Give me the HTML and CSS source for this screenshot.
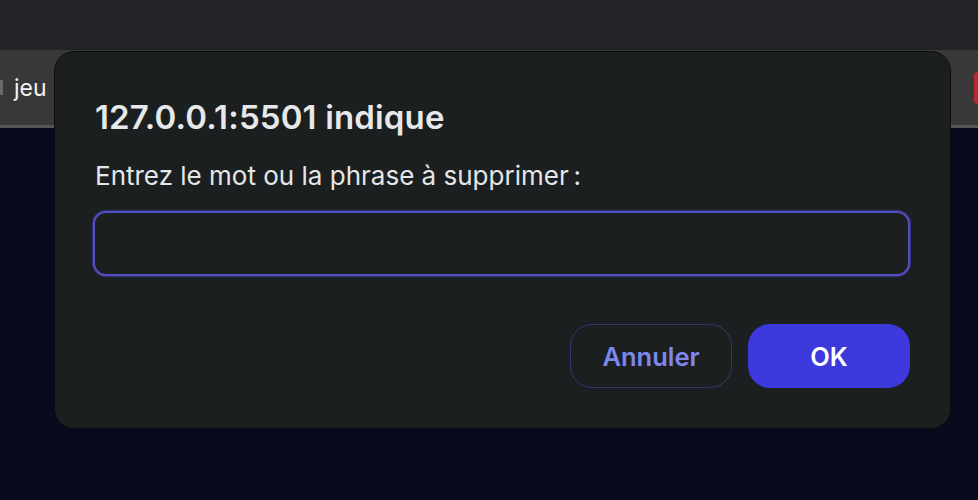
FILE: index.html
```html
<!DOCTYPE html>
<html lang="fr">
<head>
<meta charset="utf-8">
<title>Prompt</title>
<link rel="stylesheet" href="styles.css">
</head>
<body>
<div class="topbar"></div>
<div class="bookmarks">
  <span class="bm-icon"></span>
  <span class="bm-label">jeu</span>
  <span class="bm-spacer"></span>
  <span class="bm-red"></span>
</div>
<main class="page"></main>
<div class="dialog" role="dialog">
  <h1 class="dlg-title">127.0.0.1:5501 indique</h1>
  <p class="dlg-msg">Entrez le mot ou la phrase à supprimer&#8239;:</p>
  <input class="dlg-input" type="text">
  <div class="dlg-actions">
    <button class="btn btn-cancel">Annuler</button>
    <button class="btn btn-ok">OK</button>
  </div>
</div>
</body>
</html>
```
FILE: styles.css
```css
* { box-sizing: border-box; }
html, body { margin: 0; height: 100%; }
body {
  background: #0a0a1e;
  font-family: Inter, "Noto Sans", sans-serif;
  display: flex;
  flex-direction: column;
  overflow: hidden;
}
.topbar {
  height: 50px;
  background: #222326;
  flex: none;
}
.bookmarks {
  height: 78px;
  background: #383838;
  border-bottom: 3px solid #565656;
  display: flex;
  align-items: center;
  flex: none;
}
.bm-icon {
  width: 3px;
  height: 15px;
  background: #6a6a6a;
  margin-right: 11px;
}
.bm-label {
  color: #f2f2f2;
  font-size: 23px;
  line-height: 28px;
}
.bm-spacer { flex: 1; }
.bm-red {
  width: 4px;
  height: 32px;
  background: #b8292e;
  border-radius: 5px 0 0 5px;
}
.page { flex: 1; background: #0a0a1e; }

.dialog {
  position: absolute;
  left: 54px;
  top: 51px;
  width: 897px;
  height: 378px;
  background: #1b1f20;
  border: 1px solid #0c0e0f;
  border-radius: 20px;
  padding: 45px 40px 0 40px;
  display: flex;
  flex-direction: column;
}
.dlg-title {
  margin: 0;
  font-size: 33px;
  font-weight: 600;
  color: #e6e8ea;
  line-height: 40px;
  letter-spacing: 0.15px;
}
.dlg-msg {
  margin: 23px 0 0 0;
  font-size: 26px;
  color: #e4e6e8;
  line-height: 32px;
}
.dlg-input {
  margin: 19px 0 0 -2px;
  height: 65px;
  width: 817px;
  background: #1b1f20;
  border: 2px solid #534fbf;
  box-shadow: 0 0 0 1px #34317c;
  border-radius: 13px;
  outline: none;
}
.dlg-actions {
  margin: 48px 0 0 -2px;
  display: flex;
  justify-content: flex-end;
  gap: 16px;
  width: 817px;
}
.btn {
  width: 162px;
  height: 64px;
  border-radius: 22px;
  font-family: Inter, "Noto Sans", sans-serif;
  font-size: 25.5px;
  font-weight: 600;
  cursor: pointer;
}
.btn-cancel {
  background: transparent;
  border: 1px solid #343572;
  color: #7d87ec;
}
.btn-ok {
  background: #3d39dc;
  border: none;
  color: #ffffff;
}
```
